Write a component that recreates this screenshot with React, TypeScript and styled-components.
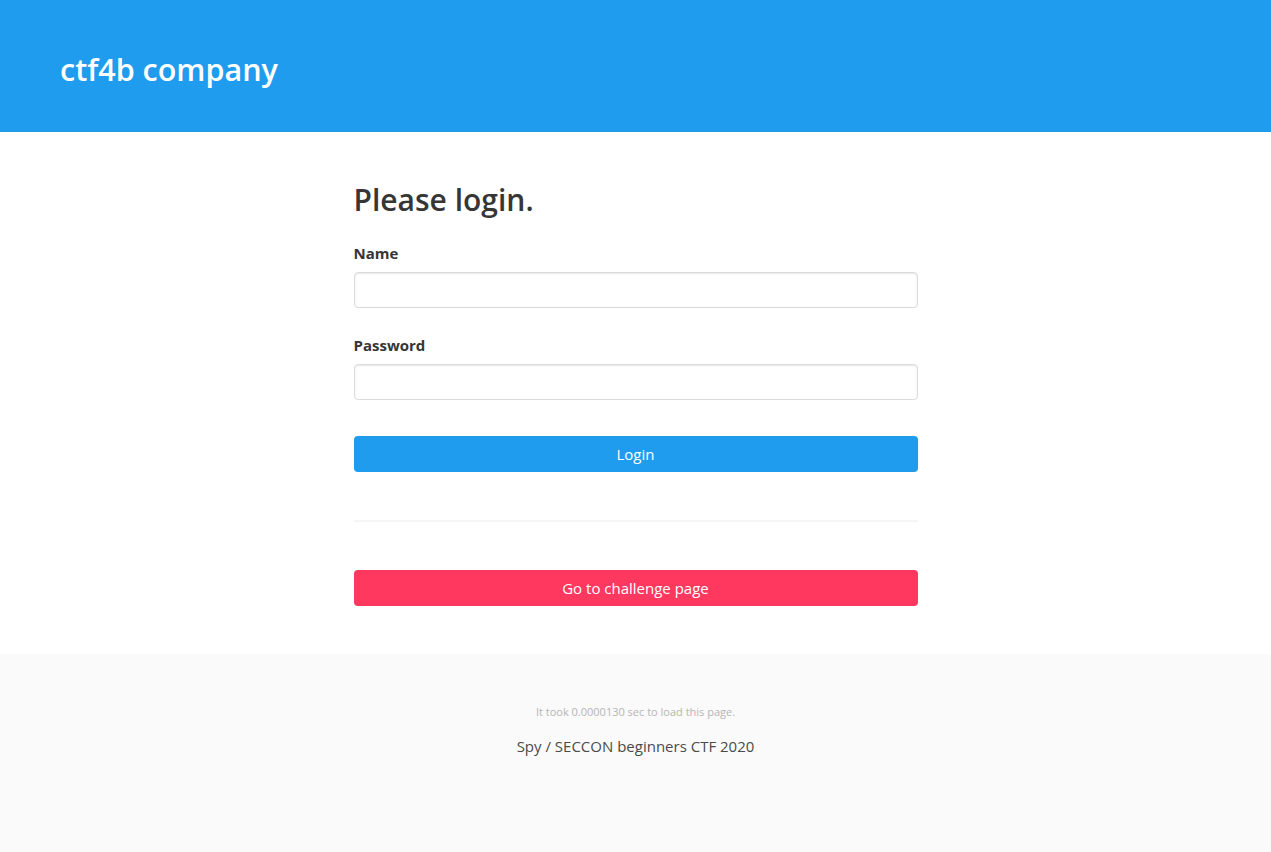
import React from 'react';
import styled, { createGlobalStyle } from 'styled-components';

const GlobalStyle = createGlobalStyle`
    html, body {
        margin: 0;
        padding: 0;
        background: #fff;
    }
    body {
        font-family: "Open Sans", "Noto Sans", sans-serif;
        font-size: 16px;
        line-height: 1.5;
        color: #4a4a4a;
    }
    * {
        box-sizing: border-box;
    }
`;

const Page = styled.div`
    display: flex;
    flex-direction: column;
    min-height: 852px;
`;

const Hero = styled.header`
    background: #209cee;
    padding: 51px 60px 45px;
`;

const Brand = styled.h1`
    margin: 0;
    color: #fff;
    font-size: 30.5px;
    font-weight: 600;
    line-height: 36px;
`;

const Section = styled.main`
    display: flex;
    justify-content: center;
    padding: 48px 24px 48px;
`;

const Column = styled.div`
    width: 564px;
    display: flex;
    flex-direction: column;
`;

const Heading = styled.h2`
    margin: 0 0 22px;
    padding-top: 2px;
    color: #363636;
    font-size: 30px;
    font-weight: 600;
    line-height: 36px;
`;

const Field = styled.div`
    display: flex;
    flex-direction: column;
    margin-bottom: 24px;
`;

const Label = styled.label`
    color: #363636;
    font-weight: 700;
    font-size: 15px;
    line-height: 24px;
    padding-top: 1px;
    margin-bottom: 7px;
`;

const Input = styled.input`
    height: 36px;
    width: 100%;
    border: 1px solid #dbdbdb;
    border-radius: 4px;
    box-shadow: inset 0 1px 2px rgba(10, 10, 10, 0.1);
    background: #fff;
    padding: 0 11px;
    font: inherit;
    color: #363636;
    outline: none;
`;

const Button = styled.button<{ tone: 'info' | 'danger' }>`
    height: 36px;
    width: 100%;
    border: none;
    border-radius: 4px;
    background: ${(p) => (p.tone === 'info' ? '#209cee' : '#ff3860')};
    color: #fff;
    font-family: inherit;
    font-size: 15px;
    line-height: 1.5;
    cursor: pointer;
`;

const LoginButton = styled(Button)`
    margin-top: 12px;
`;

const Divider = styled.hr`
    border: none;
    height: 2px;
    background: #f5f5f5;
    margin: 48px 0 48px;
`;

const Footer = styled.footer`
    flex: 1;
    background: #fafafa;
    padding: 49px 24px 96px;
    text-align: center;
`;

const Timing = styled.p`
    margin: 0 0 13px;
    color: #b5b5b5;
    font-size: 11px;
    line-height: 18px;
`;

const Credit = styled.p`
    margin: 0;
    color: #4a4a4a;
    font-size: 15px;
    line-height: 24px;
`;

export default function App(): React.ReactElement {
    return (
        <Page>
            <GlobalStyle />
            <Hero>
                <Brand>ctf4b company</Brand>
            </Hero>
            <Section>
                <Column>
                    <Heading>Please login.</Heading>
                    <Field>
                        <Label>Name</Label>
                        <Input type="text" />
                    </Field>
                    <Field>
                        <Label>Password</Label>
                        <Input type="password" />
                    </Field>
                    <LoginButton tone="info">Login</LoginButton>
                    <Divider />
                    <Button tone="danger">Go to challenge page</Button>
                </Column>
            </Section>
            <Footer>
                <Timing>It took 0.0000130 sec to load this page.</Timing>
                <Credit>Spy / SECCON beginners CTF 2020</Credit>
            </Footer>
        </Page>
    );
}
